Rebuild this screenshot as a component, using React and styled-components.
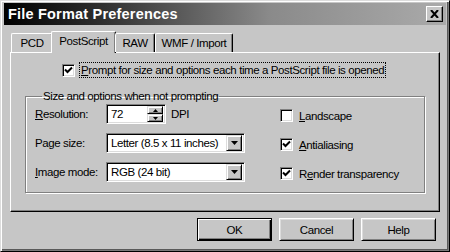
import React from "react";
import styled, { createGlobalStyle } from "styled-components";

const GlobalStyle = createGlobalStyle`
  html, body {
    margin: 0;
    padding: 0;
    background: #c6c6c6;
  }
  body {
    font-family: "Liberation Sans", Arial, sans-serif;
    font-size: 11.5px;
    letter-spacing: -0.4px;
    color: #000;
    white-space: nowrap;
  }
`;

const Window = styled.div`
  box-sizing: border-box;
  width: 450px;
  height: 252px;
  background: #c6c6c6;
  border-top: 1px solid #dcdcdc;
  border-left: 1px solid #dcdcdc;
  border-right: 1px solid #000;
  border-bottom: 1px solid #000;
  box-shadow: inset 1px 1px 0 #fff, inset -1px -1px 0 #7a7a7a,
    inset -2px -2px 0 #5a5a5a;
  padding: 2px 3px 3px 2px;
  display: flex;
  flex-direction: column;
`;

const TitleBar = styled.div`
  height: 22px;
  margin-left: 1px;
  background: linear-gradient(to right, #000 0%, #2a2a2a 20%, #8a8a8a 60%, #aaaaaa 100%);
  display: flex;
  align-items: center;
  justify-content: space-between;
  padding: 0 3px 0 4px;
`;

const Title = styled.span`
  color: #fff;
  font-weight: bold;
  font-size: 14.5px;
  letter-spacing: 0.2px;
`;

const CloseButton = styled.div`
  box-sizing: border-box;
  width: 17px;
  height: 16px;
  background: #c6c6c6;
  border-top: 1px solid #fff;
  border-left: 1px solid #fff;
  border-right: 1px solid #000;
  border-bottom: 1px solid #000;
  box-shadow: inset -1px -1px 0 #808080;
  display: flex;
  align-items: center;
  justify-content: center;
`;

const Body = styled.div`
  flex: 1;
  display: flex;
  flex-direction: column;
  padding: 6px 7px 0 7px;
`;

const TabRow = styled.div`
  display: flex;
  align-items: flex-end;
  height: 21px;
  padding-left: 1px;
  position: relative;
  z-index: 1;
`;

const Tab = styled.div`
  box-sizing: border-box;
  width: ${(p) => p.w}px;
  height: ${(p) => (p.active ? 22 : 19)}px;
  margin: ${(p) => (p.active ? "0 -1px -1px -2px" : "0")};
  background: #c6c6c6;
  border-top: 1px solid #fff;
  border-left: 1px solid #fff;
  border-right: 1px solid #000;
  border-radius: 2px 2px 0 0;
  box-shadow: inset -1px 0 0 #808080;
  display: flex;
  align-items: center;
  justify-content: center;
  padding-bottom: ${(p) => (p.active ? 3 : 0)}px;
`;

const Panel = styled.div`
  box-sizing: border-box;
  width: 430px;
  height: 160px;
  background: #c6c6c6;
  border-top: 1px solid #fff;
  border-left: 1px solid #fff;
  border-right: 1px solid #000;
  border-bottom: 1px solid #000;
  box-shadow: inset -1px -1px 0 #808080;
  padding: 10px 14px 0 14px;
  display: flex;
  flex-direction: column;
`;

const PromptRow = styled.div`
  display: flex;
  align-items: center;
  gap: 5px;
  padding-left: 37px;
  height: 14px;
`;

const FocusLabel = styled.span`
  outline: 1px dotted #000;
  outline-offset: 0;
  padding: 0 1px;
  line-height: 14px;
`;

const Group = styled.fieldset`
  box-sizing: border-box;
  margin: 13px 0 0 0;
  height: 103px;
  border: 1px solid #808080;
  box-shadow: 1px 1px 0 #fff, inset 1px 1px 0 #fff;
  padding: 2px 0 0 9px;
  display: flex;
`;

const Legend = styled.legend`
  padding: 0 1px;
  margin-left: 7px;
  line-height: 12px;
`;

const LeftCol = styled.div`
  width: 245px;
  display: flex;
  flex-direction: column;
  gap: 9px;
`;

const RightCol = styled.div`
  display: flex;
  flex-direction: column;
  gap: 16px;
  padding-top: 5px;
`;

const FieldRow = styled.div`
  display: flex;
  align-items: center;
  height: 20px;
`;

const FieldLabel = styled.span`
  width: 71px;
`;

const Sunken = styled.div`
  box-sizing: border-box;
  width: ${(p) => p.w}px;
  height: 20px;
  background: #fff;
  border-top: 1px solid #808080;
  border-left: 1px solid #808080;
  border-right: 1px solid #fff;
  border-bottom: 1px solid #fff;
  box-shadow: inset 1px 1px 0 #000, inset -1px -1px 0 #dcdcdc;
  display: flex;
  align-items: center;
  padding: 2px 2px 2px 4px;
`;

const FieldText = styled.span`
  flex: 1;
`;

const SpinBox = styled.div`
  display: flex;
  flex-direction: column;
  width: 16px;
  height: 16px;
`;

const RaisedButton = styled.div`
  box-sizing: border-box;
  flex: ${(p) => (p.fixed ? "none" : 1)};
  width: 16px;
  height: ${(p) => (p.fixed ? "16px" : "auto")};
  background: #c6c6c6;
  border-top: 1px solid #dcdcdc;
  border-left: 1px solid #dcdcdc;
  border-right: 1px solid #000;
  border-bottom: 1px solid #000;
  box-shadow: inset 1px 1px 0 #fff, inset -1px -1px 0 #808080;
  display: flex;
  align-items: center;
  justify-content: center;
`;

const Unit = styled.span`
  margin-left: 5px;
`;

const CheckRow = styled.div`
  display: flex;
  align-items: center;
  gap: 6px;
  height: 13px;
`;

const Box = styled.div`
  box-sizing: border-box;
  width: 13px;
  height: 13px;
  flex-shrink: 0;
  background: #fff;
  border-top: 1px solid #808080;
  border-left: 1px solid #808080;
  border-right: 1px solid #fff;
  border-bottom: 1px solid #fff;
  box-shadow: inset 1px 1px 0 #000, inset -1px -1px 0 #dcdcdc;
  display: flex;
  align-items: center;
  justify-content: center;
`;

const ButtonRow = styled.div`
  display: flex;
  justify-content: flex-end;
  gap: 7px;
  padding: 6px 3px 0 0;
`;

const PushButton = styled.div`
  box-sizing: border-box;
  width: 75px;
  height: 23px;
  background: #c6c6c6;
  border: 1px solid #000;
  border-top-color: ${(p) => (p.primary ? "#000" : "#fff")};
  border-left-color: ${(p) => (p.primary ? "#000" : "#fff")};
  box-shadow: ${(p) =>
    p.primary
      ? "inset 1px 1px 0 #fff, inset -1px -1px 0 #000, inset -2px -2px 0 #808080"
      : "inset 1px 1px 0 #dcdcdc, inset -1px -1px 0 #808080"};
  display: flex;
  align-items: center;
  justify-content: center;
`;

const U = styled.span`
  text-decoration: underline;
`;

const Check = ({ on }) => (
  <Box>
    {on && (
      <svg width="9" height="9" viewBox="0 0 9 9">
        <path d="M1 3.5 L3.5 6 L8 1.5" stroke="#000" strokeWidth="2" fill="none" />
      </svg>
    )}
  </Box>
);

const Arrow = ({ up, size = 3 }) => (
  <svg width={size * 2 + 1} height={size + 1} viewBox={`0 0 ${size * 2 + 1} ${size + 1}`}>
    <path
      d={
        up
          ? `M0 ${size + 1} L${size + 0.5} 0 L${size * 2 + 1} ${size + 1} Z`
          : `M0 0 L${size + 0.5} ${size + 1} L${size * 2 + 1} 0 Z`
      }
      fill="#000"
    />
  </svg>
);

const Combo = ({ text, w }) => (
  <Sunken w={w}>
    <FieldText>{text}</FieldText>
    <RaisedButton fixed>
      <Arrow size={3} />
    </RaisedButton>
  </Sunken>
);

export default function App() {
  return (
    <>
      <GlobalStyle />
      <Window>
        <TitleBar>
          <Title>File Format Preferences</Title>
          <CloseButton>
            <svg width="9" height="8" viewBox="0 0 9 8">
              <path d="M1 0 L8 8 M8 0 L1 8" stroke="#000" strokeWidth="2" />
            </svg>
          </CloseButton>
        </TitleBar>
        <Body>
          <TabRow>
            <Tab w={42}>PCD</Tab>
            <Tab w={65} active>
              PostScript
            </Tab>
            <Tab w={40}>RAW</Tab>
            <Tab w={78}>WMF / Import</Tab>
          </TabRow>
          <Panel>
            <PromptRow>
              <Check on />
              <FocusLabel>
                <U>P</U>rompt for size and options each time a PostScript file is opened
              </FocusLabel>
            </PromptRow>
            <Group>
              <Legend>Size and options when not prompting</Legend>
              <LeftCol>
                <FieldRow>
                  <FieldLabel>
                    <U>R</U>esolution:
                  </FieldLabel>
                  <Sunken w={60}>
                    <FieldText>72</FieldText>
                    <SpinBox>
                      <RaisedButton>
                        <Arrow up size={2} />
                      </RaisedButton>
                      <RaisedButton>
                        <Arrow size={2} />
                      </RaisedButton>
                    </SpinBox>
                  </Sunken>
                  <Unit>DPI</Unit>
                </FieldRow>
                <FieldRow>
                  <FieldLabel>Page size:</FieldLabel>
                  <Combo w={139} text="Letter (8.5 x 11 inches)" />
                </FieldRow>
                <FieldRow>
                  <FieldLabel>
                    <U>I</U>mage mode:
                  </FieldLabel>
                  <Combo w={139} text="RGB (24 bit)" />
                </FieldRow>
              </LeftCol>
              <RightCol>
                <CheckRow>
                  <Check />
                  <span>
                    <U>L</U>andscape
                  </span>
                </CheckRow>
                <CheckRow>
                  <Check on />
                  <span>
                    <U>A</U>ntialiasing
                  </span>
                </CheckRow>
                <CheckRow>
                  <Check on />
                  <span>
                    R<U>e</U>nder transparency
                  </span>
                </CheckRow>
              </RightCol>
            </Group>
          </Panel>
          <ButtonRow>
            <PushButton primary>OK</PushButton>
            <PushButton>Cancel</PushButton>
            <PushButton>Help</PushButton>
          </ButtonRow>
        </Body>
      </Window>
    </>
  );
}
